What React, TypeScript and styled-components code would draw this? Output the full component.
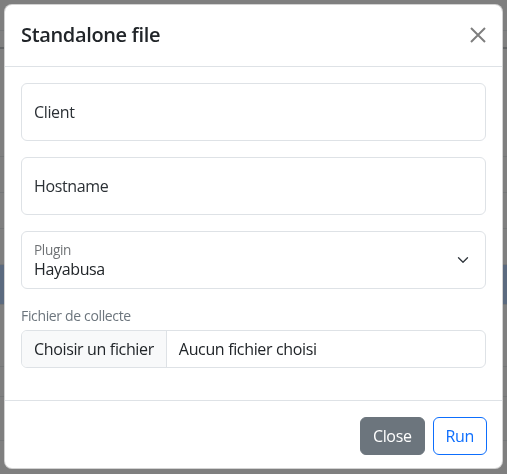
import styled, { createGlobalStyle } from 'styled-components';

const GlobalStyle = createGlobalStyle`
  html, body {
    margin: 0;
    padding: 0;
    background: #ffffff;
  }
  body {
    font-family: "Open Sans", "Noto Sans", "Liberation Sans", sans-serif;
    color: #212529;
    letter-spacing: -0.35px;
    -webkit-font-smoothing: antialiased;
  }
`;

// page behind the modal, only a few table rules show through the backdrop
const Page = styled.div`
  height: 474px;
  display: flex;
  flex-direction: column;
`;

const PageRow = styled.div<{ $h: number; $blue?: boolean; $strong?: boolean }>`
  height: ${(p) => p.$h}px;
  flex: none;
  box-sizing: border-box;
  border-bottom: ${(p) => (p.$strong ? '2px solid #c4c8cc' : '1px solid #e9ecef')};
  background: ${(p) => (p.$blue ? '#b6d4fe' : 'transparent')};
`;

const Backdrop = styled.div`
  position: fixed;
  inset: 0;
  background: rgba(0, 0, 0, 0.5);
  padding: 4px 4px;
  box-sizing: border-box;
`;

const Modal = styled.div`
  background: #ffffff;
  border: 1px solid rgba(0, 0, 0, 0.175);
  border-radius: 8px;
  display: flex;
  flex-direction: column;
  overflow: hidden;
`;

const Header = styled.div`
  display: flex;
  align-items: center;
  justify-content: space-between;
  padding: 15px 16px 16px;
  border-bottom: 1px solid #dee2e6;
`;

const Title = styled.h5`
  margin: 0;
  font-size: 20px;
  font-weight: 600;
  line-height: 30px;
  color: #212529;
`;

const CloseX = styled.button`
  width: 16px;
  height: 16px;
  padding: 0;
  border: none;
  background: transparent;
  display: flex;
  align-items: center;
  justify-content: center;
  opacity: 0.5;
  cursor: pointer;
`;

const Body = styled.div`
  padding: 16px;
`;

const Field = styled.div`
  position: relative;
  height: 58px;
  box-sizing: border-box;
  border: 1px solid #dee2e6;
  border-radius: 6px;
  margin-bottom: 16px;
  display: flex;
  align-items: center;
  padding: 0 12px;
  font-size: 16px;
  color: #2b3035;
`;

const SelectField = styled(Field)`
  flex-direction: column;
  align-items: flex-start;
  justify-content: center;
  padding-right: 36px;
`;

const SmallLabel = styled.span`
  font-size: 13.6px;
  line-height: 17px;
  color: rgba(33, 37, 41, 0.65);
`;

const SelectValue = styled.span`
  font-size: 16px;
  line-height: 22px;
  color: #212529;
`;

const Chevron = styled.svg`
  position: absolute;
  right: 16px;
  top: 50%;
  margin-top: -5px;
`;

const FileLabel = styled.div`
  font-size: 14px;
  line-height: 21px;
  color: #6c757d;
  margin-bottom: 4px;
`;

const FileInput = styled.div`
  display: flex;
  height: 38px;
  box-sizing: border-box;
  border: 1px solid #dee2e6;
  border-radius: 6px;
  overflow: hidden;
  margin-bottom: 16px;
  font-size: 16px;
`;

const FileButton = styled.span`
  display: flex;
  align-items: center;
  padding: 0 12px;
  background: #f8f9fa;
  border-right: 1px solid #dee2e6;
  color: #212529;
`;

const FileName = styled.span`
  display: flex;
  align-items: center;
  padding: 0 12px;
  color: #212529;
`;

const Footer = styled.div`
  display: flex;
  justify-content: flex-end;
  gap: 8px;
  padding: 16px 15px 13px;
  border-top: 1px solid #dee2e6;
`;

const Button = styled.button<{ $variant: 'secondary' | 'outline' }>`
  height: 38px;
  padding: 0 12px;
  border-radius: 6px;
  font-family: inherit;
  letter-spacing: inherit;
  font-size: 16px;
  cursor: pointer;
  border: 1px solid ${(p) => (p.$variant === 'secondary' ? '#6c757d' : '#0d6efd')};
  background: ${(p) => (p.$variant === 'secondary' ? '#6c757d' : '#ffffff')};
  color: ${(p) => (p.$variant === 'secondary' ? '#ffffff' : '#0d6efd')};
`;

function App() {
  return (
    <>
      <GlobalStyle />
      <Page>
        <PageRow $h={31} />
        <PageRow $h={18} $strong />
        <PageRow $h={108} />
        <PageRow $h={36} />
        <PageRow $h={36} />
        <PageRow $h={36} />
        <PageRow $h={40} $blue />
        <PageRow $h={62} />
        <PageRow $h={30} />
        <PageRow $h={44} />
      </Page>
      <Backdrop>
        <Modal>
          <Header>
            <Title>Standalone file</Title>
            <CloseX aria-label="Close">
              <svg width="16" height="16" viewBox="0 0 16 16">
                <path d="M1 1 L15 15 M15 1 L1 15" stroke="#000" strokeWidth="2" fill="none" />
              </svg>
            </CloseX>
          </Header>
          <Body>
            <Field>Client</Field>
            <Field>Hostname</Field>
            <SelectField>
              <SmallLabel>Plugin</SmallLabel>
              <SelectValue>Hayabusa</SelectValue>
              <Chevron width="12" height="10" viewBox="0 0 16 12">
                <path d="M2 3 L8 9 L14 3" stroke="#343a40" strokeWidth="1.8" fill="none" strokeLinecap="round" strokeLinejoin="round" />
              </Chevron>
            </SelectField>
            <FileLabel>Fichier de collecte</FileLabel>
            <FileInput>
              <FileButton>Choisir un fichier</FileButton>
              <FileName>Aucun fichier choisi</FileName>
            </FileInput>
          </Body>
          <Footer>
            <Button $variant="secondary">Close</Button>
            <Button $variant="outline">Run</Button>
          </Footer>
        </Modal>
      </Backdrop>
    </>
  );
}

export default App;
